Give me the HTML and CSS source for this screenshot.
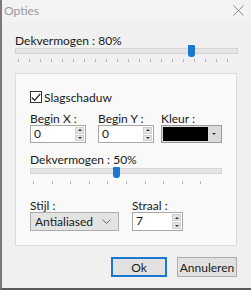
FILE: index.html
```html
<!DOCTYPE html>
<html lang="nl">
<head>
  <meta charset="UTF-8">
  <title>Opties</title>
  <link rel="stylesheet" href="styles.css">
</head>
<body>
  <div class="window">
    <div class="titlebar">
      <span class="title">Opties</span>
      <svg class="close" width="11" height="11" viewBox="0 0 11 11"><path d="M0.5 0.5 L10.5 10.5 M10.5 0.5 L0.5 10.5" stroke="#8a8a8a" stroke-width="1"/></svg>
    </div>

    <div class="content">
      <div class="label top">Dekvermogen : 80%</div>
      <div class="slider wide">
        <div class="track"></div>
        <div class="thumb" style="left: 173px"></div>
        <div class="ticks"></div>
      </div>

      <div class="group">
        <label class="check">
          <span class="box">
            <svg width="10" height="9" viewBox="0 0 10 9"><path d="M0.8 4.5 L3.6 7.4 L9.2 1" fill="none" stroke="#222" stroke-width="1.2"/></svg>
          </span>
          Slagschaduw
        </label>

        <div class="row">
          <div class="field fx">
            <div class="label">Begin X :</div>
            <div class="spin w56"><span class="val">0</span><span class="arrows"><i class="up"></i><i class="down"></i></span></div>
          </div>
          <div class="field fy">
            <div class="label">Begin Y :</div>
            <div class="spin w56"><span class="val">0</span><span class="arrows"><i class="up"></i><i class="down"></i></span></div>
          </div>
          <div class="field">
            <div class="label">Kleur :</div>
            <div class="color"><span class="swatch"></span><span class="drop"><i class="down"></i></span></div>
          </div>
        </div>

        <div class="label mid">Dekvermogen : 50%</div>
        <div class="slider narrow">
          <div class="track"></div>
          <div class="thumb" style="left: 83px"></div>
          <div class="ticks"></div>
        </div>

        <div class="row bottom">
          <div class="field fs">
            <div class="label">Stijl :</div>
            <div class="combo"><span>Antialiased</span>
              <svg width="9" height="5" viewBox="0 0 9 5"><path d="M0.5 0.5 L4.5 4.5 L8.5 0.5" fill="none" stroke="#666" stroke-width="1"/></svg>
            </div>
          </div>
          <div class="field">
            <div class="label">Straal :</div>
            <div class="spin w51 tall"><span class="val">7</span><span class="arrows"><i class="up"></i><i class="down"></i></span></div>
          </div>
        </div>
      </div>

      <div class="buttons">
        <button class="btn ok">Ok</button>
        <button class="btn cancel">Annuleren</button>
      </div>
    </div>
  </div>
</body>
</html>
```

FILE: styles.css
```css
* {
  box-sizing: border-box;
  margin: 0;
  padding: 0;
}

body {
  font-family: Lato, "Noto Sans", sans-serif;
  font-size: 12px;
  color: #1a1a1a;
  background: #f0f0f0;
}

.window {
  width: 251px;
  height: 290px;
  background: #f0f0f0;
  border-left: 2px solid #7a7a7a;
  border-bottom: 2px solid #5a5a5a;
}

/* Title bar */
.titlebar {
  height: 22px;
  background: #f3f3f3;
  display: flex;
  align-items: center;
  justify-content: space-between;
  padding: 0 7px 1px 2px;
}

.title {
  color: #9a9a9a;
  font-size: 12px;
}

/* Content */
.content {
  padding: 11px 13px 0 13px;
}

.label {
  line-height: 13px;
  height: 13px;
  white-space: nowrap;
}

.label.top {
  line-height: 15px;
  height: 15px;
}

/* Slider */
.slider {
  position: relative;
  height: 16px;
}

.slider.wide { width: 223px; }
.slider.narrow { width: 192px; height: 17px; }

.slider .track {
  position: absolute;
  left: 0;
  right: 0;
  top: 0;
  height: 6px;
  background: #e5e5e5;
  border: 1px solid #d4d4d4;
}

.slider .thumb {
  position: absolute;
  top: -3px;
  width: 7px;
  height: 12px;
  background: #1b78d0;
  border-radius: 1px 1px 3px 3px;
}

.slider.narrow .thumb {
  top: -1px;
  height: 11px;
}

.slider .ticks {
  position: absolute;
  left: 3px;
  right: 3px;
  top: 11px;
  height: 3px;
  background: repeating-linear-gradient(90deg, #b4b4b4 0 1px, transparent 1px 11px);
}

.slider.narrow .ticks {
  top: 13px;
  background: repeating-linear-gradient(90deg, #b4b4b4 0 1px, transparent 1px 18.6px);
}

/* Group box */
.group {
  margin-top: 9px;
  width: 222px;
  height: 173px;
  background: #f9f9f9;
  border: 1px solid #dcdcdc;
  padding: 17px 0 0 14px;
}

.check {
  display: flex;
  align-items: center;
  gap: 2px;
  height: 12px;
}

.box {
  width: 12px;
  height: 12px;
  border: 1px solid #333;
  background: #fff;
  display: flex;
  align-items: center;
  justify-content: center;
}

.row {
  display: flex;
  margin-top: 9px;
}

.fx { width: 68px; }
.fy { width: 63px; }
.fs { width: 102px; }

.row.bottom {
  margin-top: 14px;
}

.label.mid {
  margin-top: 10px;
  line-height: 14px;
  height: 15px;
}

/* Spin box */
.spin {
  height: 18px;
  background: #fff;
  border: 1px solid #a8a8a8;
  display: flex;
  justify-content: space-between;
  padding-left: 3px;
}

.spin.tall { height: 19px; }
.spin.w56 { width: 56px; }
.spin.w51 { width: 51px; }

.spin .val {
  line-height: 16px;
}

.arrows {
  width: 9px;
  display: flex;
  flex-direction: column;
  gap: 1px;
  margin: 1px 1px 1px 0;
}

.arrows i {
  flex: 1;
  display: flex;
  align-items: center;
  justify-content: center;
  background: #e4e4e4;
  border: 1px solid #cfcfcf;
}

.up::before, .down::before {
  content: "";
  display: block;
  border-left: 2px solid transparent;
  border-right: 2px solid transparent;
}

.up::before { border-bottom: 2px solid #333; }
.down::before { border-top: 2px solid #333; }

/* Colour picker */
.color {
  width: 61px;
  height: 18px;
  border: 1px solid #9a9a9a;
  background: #dadada;
  display: flex;
  padding: 1px;
}

.swatch {
  flex: 1;
  background: #000;
}

.drop {
  width: 12px;
  display: flex;
  align-items: center;
  justify-content: center;
}

.drop i {
  display: block;
}

/* Combo box */
.combo {
  width: 89px;
  height: 19px;
  background: #e3e3e3;
  border: 1px solid #adadad;
  display: flex;
  align-items: center;
  justify-content: space-between;
  padding: 0 7px 0 4px;
}

/* Buttons */
.buttons {
  display: flex;
  justify-content: flex-end;
  gap: 10px;
  margin-top: 11px;
  padding-right: 1px;
}

.btn {
  font-family: inherit;
  font-size: 12px;
  color: #1a1a1a;
  height: 20px;
  background: #e1e1e1;
  border: 1px solid #adadad;
}

.btn.ok {
  width: 56px;
  border: 2px solid #1b78d0;
}

.btn.cancel {
  width: 60px;
}
```
